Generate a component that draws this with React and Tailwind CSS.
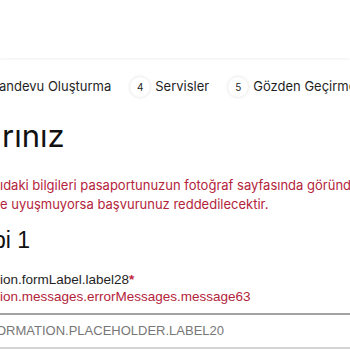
export default function App() {
  return (
    <div className="w-[350px] h-[350px] overflow-hidden bg-white" style={{ fontFamily: "Inter, 'Liberation Sans', sans-serif" }}>
      <div className="h-[58px] bg-white shadow-[0_1px_3px_rgba(0,0,0,0.06)]" />
      <div className="flex items-center h-[22px] mt-[18px] text-[13px] text-[#1f1f1f] whitespace-nowrap">
        <span className="shrink-0 ml-[-1px]">andevu Oluşturma</span>
        <span className="shrink-0 ml-[18px] w-[22px] h-[22px] rounded-full border border-[#f0f0f0] shadow-[0_0_3px_rgba(0,0,0,0.07)] flex items-center justify-center text-[10px]">4</span>
        <span className="shrink-0 ml-[4px]">Servisler</span>
        <span className="shrink-0 ml-[18px] w-[22px] h-[22px] rounded-full border border-[#f0f0f0] shadow-[0_0_3px_rgba(0,0,0,0.07)] flex items-center justify-center text-[10px]">5</span>
        <span className="shrink-0 ml-[4px]">Gözden Geçirme</span>
      </div>
      <div className="mt-[18px] text-[31px] leading-[40px] text-[#111] whitespace-nowrap pl-[2px]">rınız</div>
      <div className="mt-[20px] text-[13px] leading-[19px] text-[#b3243b] whitespace-nowrap">
        <div>ıdaki bilgileri pasaportunuzun fotoğraf sayfasında göründüğü</div>
        <div>e uyuşmuyorsa başvurunuz reddedilecektir.</div>
      </div>
      <div className="mt-[11px] text-[23px] leading-[30px] text-[#111] whitespace-nowrap" style={{ fontFamily: "'Liberation Sans', Arial, sans-serif" }}>
        <span className="ml-[-7px]">bi 1</span>
      </div>
      <div style={{ fontFamily: "'Liberation Sans', Arial, sans-serif" }} className="text-[13.5px] whitespace-nowrap">
        <div className="mt-[16px] leading-[17px] text-[#1f1f1f]">ion.formLabel.label28<span className="text-[#c0283f] font-bold">*</span></div>
        <div className="leading-[17px] text-[#b3243b]">ion.messages.errorMessages.message63</div>
        <div className="mt-[8px] h-[36px] border-t-2 border-b-2 border-t-[#a3a3a3] border-b-[#d4d4d4] flex items-center text-[13px] text-[#777]">
          <span className="ml-[-4px]">ORMATION.PLACEHOLDER.LABEL20</span>
        </div>
      </div>
    </div>
  );
}
